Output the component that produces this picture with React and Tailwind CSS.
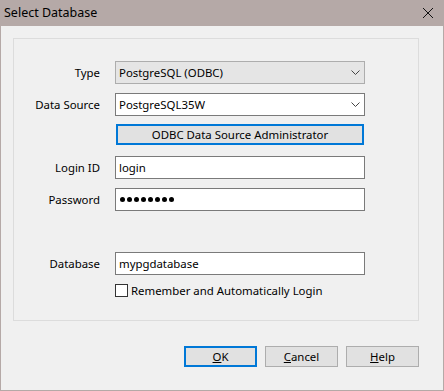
import React from 'react'

const Chevron = () => (
  <svg width="9" height="5" viewBox="0 0 9 5" className="shrink-0">
    <polyline points="0.5,0.5 4.5,4.5 8.5,0.5" fill="none" stroke="#444" strokeWidth="1" />
  </svg>
)

const Label = ({ children }) => (
  <div className="w-[86px] text-right leading-[23px]">{children}</div>
)

const Row = ({ label, className = '', children }) => (
  <div className={`flex items-center gap-[15px] h-[23px] ${className}`}>
    <Label>{label}</Label>
    {children}
  </div>
)

const Button = ({ children, focused }) => (
  <button
    className={`w-[73px] h-[21px] bg-[#e1e1e1] flex items-center justify-center leading-none ${
      focused ? 'border-2 border-[#0078d7]' : 'border border-[#adadad]'
    }`}
  >
    {children}
  </button>
)

export default function App() {
  return (
    <div className="w-[444px] h-[391px] flex flex-col text-[11.4px] text-black font-['Noto_Sans',sans-serif]">
      {/* title bar */}
      <div className="h-[26px] bg-[#b5a9a7] flex items-center justify-between pl-[4px] pr-[11px]">
        <span className="text-[12.5px]">Select Database</span>
        <svg width="10" height="10" viewBox="0 0 10 10">
          <line x1="0" y1="0" x2="10" y2="10" stroke="#111" strokeWidth="1" />
          <line x1="10" y1="0" x2="0" y2="10" stroke="#111" strokeWidth="1" />
        </svg>
      </div>

      <div className="flex-1 bg-[#f0f0f0] border-x border-b border-[#b5a9a7] pt-[12px] pl-[12px]">
        {/* group box */}
        <div className="w-[406px] h-[283px] border border-[#dcdcdc] flex flex-col pt-[22px]">
          <Row label="Type">
            <div className="w-[250px] h-[23px] bg-[#e5e5e5] border border-[#adadad] flex items-center justify-between pl-[3px] pr-[4px]">
              <span>PostgreSQL (ODBC)</span>
              <Chevron />
            </div>
          </Row>
          <Row label="Data Source" className="mt-[9px]">
            <div className="w-[250px] h-[23px] bg-white border border-[#7a7a7a] flex items-center justify-between pl-[3px] pr-[4px]">
              <span>PostgreSQL35W</span>
              <Chevron />
            </div>
          </Row>
          <div className="flex mt-[8px] pl-[102px]">
            <button className="w-[248px] h-[21px] bg-[#e1e1e1] border-2 border-[#0078d7] flex items-center justify-center leading-none">
              ODBC Data Source Administrator
            </button>
          </div>
          <Row label="Login ID" className="mt-[11px]">
            <div className="w-[250px] h-[23px] bg-white border border-[#7a7a7a] flex items-center pl-[3px]">
              login
            </div>
          </Row>
          <Row label="Password" className="mt-[9px]">
            <div className="w-[250px] h-[23px] bg-white border border-[#7a7a7a] flex items-center pl-[4px] gap-[2px]">
              {[0, 1, 2, 3, 4, 5, 6, 7].map(i => (
                <span key={i} className="w-[5px] h-[5px] rounded-full bg-black" />
              ))}
            </div>
          </Row>
          <Row label="Database" className="mt-[41px]">
            <div className="w-[250px] h-[23px] bg-white border border-[#7a7a7a] flex items-center pl-[3px]">
              mypgdatabase
            </div>
          </Row>
          <div className="flex items-center mt-[9px] pl-[101px] h-[13px]">
            <div className="w-[13px] h-[13px] bg-white border border-[#333]" />
            <span className="ml-[3px]">Remember and Automatically Login</span>
          </div>
        </div>

        {/* buttons */}
        <div className="w-[406px] flex justify-end gap-[8px] mt-[25px]">
          <Button focused>
            <span className="underline">O</span>K
          </Button>
          <Button>
            <span className="underline">C</span>ancel
          </Button>
          <Button>
            <span className="underline">H</span>elp
          </Button>
        </div>
      </div>
    </div>
  )
}
